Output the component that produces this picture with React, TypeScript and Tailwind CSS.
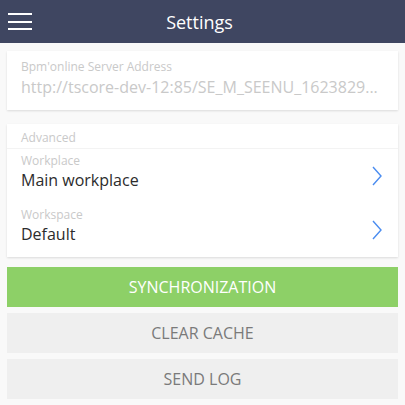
const font = { fontFamily: '"Open Sans", "Noto Sans", sans-serif' }

function Chevron() {
  return (
    <svg width="12" height="20" viewBox="0 0 12 20" className="shrink-0">
      <path d="M2 1 L10 10 L2 19" fill="none" stroke="#4a8cf0" strokeWidth="1.4" />
    </svg>
  )
}

function PickRow({ label, value }: { label: string; value: string }) {
  return (
    <div className="flex items-center justify-between pl-[14px] pr-[15px] h-[54px]">
      <div className="flex flex-col self-start pt-[5px]">
        <span className="text-[12px] leading-[14px] text-[#c9c9c9]">{label}</span>
        <span className="text-[16px] leading-[24px] text-[#2c2c2c]">{value}</span>
      </div>
      <Chevron />
    </div>
  )
}

export default function App() {
  return (
    <div className="w-[405px] h-[405px] bg-[#f9f9f9] flex flex-col overflow-hidden" style={font}>
      {/* Header */}
      <div className="h-[43px] bg-[#3f4661] flex items-center relative shrink-0">
        <div className="absolute left-[8px] top-[13px] flex flex-col gap-[5.5px]">
          <div className="w-[24px] h-[2px] bg-white" />
          <div className="w-[24px] h-[2px] bg-white" />
          <div className="w-[24px] h-[2px] bg-white" />
        </div>
        <div className="flex-1 text-center text-white text-[18px] pr-[6px] pt-[2px]">Settings</div>
      </div>

      <div className="flex flex-col px-[7px] pt-[8px]">
        {/* Server address */}
        <div className="bg-white shadow-[0_1px_2px_rgba(0,0,0,0.12)] h-[59px] px-[14px] pt-[8px] flex flex-col">
          <span className="text-[12px] leading-[16px] text-[#c9c9c9]">Bpm'online Server Address</span>
          <span className="text-[16px] leading-[24px] text-[#c9c9c9] whitespace-nowrap">
            http://tscore-dev-12:85/SE_M_SEENU_1623829...
          </span>
        </div>

        {/* Advanced */}
        <div className="bg-white shadow-[0_1px_2px_rgba(0,0,0,0.12)] mt-[14px] flex flex-col">
          <div className="h-[25px] px-[14px] pt-[3px] flex items-center border-b border-[#f3f3f3]">
            <span className="text-[12px] text-[#c9c9c9]">Advanced</span>
          </div>
          <PickRow label="Workplace" value="Main workplace" />
          <PickRow label="Workspace" value="Default" />
        </div>

        {/* Buttons */}
        <div className="flex flex-col gap-[6px] mt-[10px]">
          <div className="h-[40px] bg-[#8dd067] flex items-center justify-center text-white text-[16px]">
            SYNCHRONIZATION
          </div>
          <div className="h-[40px] bg-[#efefef] flex items-center justify-center text-[#7a7a7a] text-[16px]">
            CLEAR CACHE
          </div>
          <div className="h-[40px] bg-[#efefef] flex items-center justify-center text-[#7a7a7a] text-[16px]">
            SEND LOG
          </div>
        </div>
      </div>
    </div>
  )
}
